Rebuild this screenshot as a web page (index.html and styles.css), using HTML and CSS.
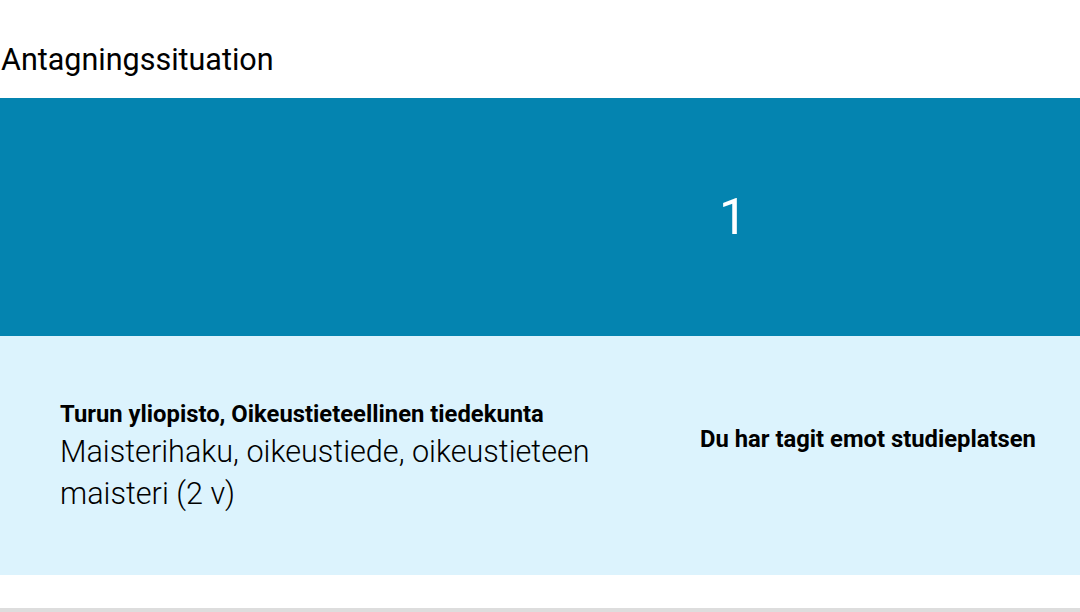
FILE: index.html
```html
<!DOCTYPE html>
<html lang="sv">
<head>
<meta charset="utf-8">
<link rel="stylesheet" href="styles.css">
</head>
<body>
<main class="page">
  <h2 class="title">Antagningssituation</h2>
  <section class="rank">
    <span class="rank-number">1</span>
  </section>
  <section class="result">
    <div class="result-info">
      <div class="org">Turun yliopisto, Oikeustieteellinen tiedekunta</div>
      <div class="program">Maisterihaku, oikeustiede, oikeustieteen maisteri (2 v)</div>
    </div>
    <div class="result-status">Du har tagit emot studieplatsen</div>
  </section>
  <div class="spacer"></div>
  <div class="bottom-line"></div>
</main>
</body>
</html>
```
FILE: styles.css
```css
html, body {
  margin: 0;
  padding: 0;
  background: #ffffff;
}
body {
  font-family: Roboto, "Liberation Sans", sans-serif;
  color: #000000;
  width: 1080px;
  height: 612px;
  overflow: hidden;
}
.page {
  display: flex;
  flex-direction: column;
  height: 612px;
}
.title {
  flex-shrink: 0;
  margin: 0;
  padding: 41px 0 0 1px;
  height: 98px;
  box-sizing: border-box;
  font-size: 30.5px;
  font-weight: 400;
  line-height: 38px;
}
.rank {
  flex-shrink: 0;
  background: #0484b0;
  height: 238px;
  display: flex;
  align-items: center;
  justify-content: center;
  padding-left: 386px;
  box-sizing: border-box;
}
.rank-number {
  color: #ffffff;
  font-size: 50px;
  font-weight: 400;
  line-height: 1;
}
.result {
  flex-shrink: 0;
  background: #dcf3fd;
  height: 239px;
  display: flex;
  align-items: center;
  padding-left: 60px;
  box-sizing: border-box;
}
.result-info {
  width: 600px;
}
.org {
  font-size: 23.8px;
  font-weight: 700;
  line-height: 34px;
}
.program {
  font-size: 30.6px;
  font-weight: 300;
  line-height: 42px;
}
.result-status {
  margin-left: 40px;
  margin-bottom: 34px;
  font-size: 23.8px;
  font-weight: 700;
  line-height: 34px;
}
.spacer {
  flex: 1;
}
.bottom-line {
  flex-shrink: 0;
  height: 4px;
  background: #dddddd;
}
```
